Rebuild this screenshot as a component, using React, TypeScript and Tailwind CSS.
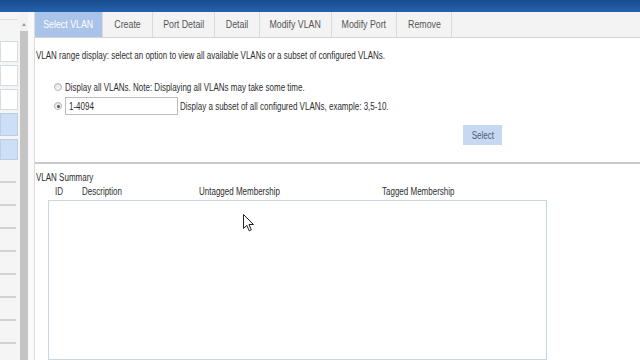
// VLAN 선택 화면 재현
import type { ReactNode } from 'react'

const TABS = [
  { label: 'Select VLAN', w: 'w-[68px]', active: true },
  { label: 'Create', w: 'w-[50px]' },
  { label: 'Port Detail', w: 'w-[62px]' },
  { label: 'Detail', w: 'w-[45px]' },
  { label: 'Modify VLAN', w: 'w-[72px]' },
  { label: 'Modify Port', w: 'w-[65px]' },
  { label: 'Remove', w: 'w-[55px]' },
]

// 원본 캡처가 가로로 눌려 있어서 글자만 좁게 그린다
function T({ children, center }: { children: ReactNode; center?: boolean }) {
  return (
    <span className={`inline-block whitespace-nowrap scale-x-[0.8] ${center ? 'origin-center' : 'origin-left'}`}>
      {children}
    </span>
  )
}

function Radio({ checked }: { checked?: boolean }) {
  return (
    <span className="w-[8px] h-[8px] rounded-full border border-[#b5b5b5] bg-gradient-to-b from-[#e2e2e2] to-[#fafafa] flex items-center justify-center shrink-0">
      {checked && <span className="w-[3px] h-[3px] rounded-full bg-[#555]" />}
    </span>
  )
}

function Sidebar() {
  return (
    <div className="w-[34px] flex shrink-0">
      <div className="w-[18px] bg-[#f5f5f5] flex flex-col overflow-hidden">
        <div className="h-[8px] shrink-0 border-b border-[#dedede]" />
        <div className="h-[21px] shrink-0" />
        <div className="flex flex-col gap-[3px] shrink-0">
          <div className="h-[21px] bg-white border border-[#d3dbe4]" />
          <div className="h-[21px] bg-white border border-[#d3dbe4]" />
          <div className="h-[21px] bg-white border border-[#d3dbe4]" />
          <div className="h-[23px] bg-[#cddff5] border border-[#b9cfe9]" />
          <div className="h-[21px] bg-[#cddff5] border border-[#b9cfe9]" />
        </div>
        {Array.from({ length: 9 }).map((_, i) => (
          <div key={i} className="h-[23px] shrink-0 border-b-2 border-[#d2d2d2] mr-[2px]" />
        ))}
      </div>
      <div className="w-[2px] bg-[#f5f5f5]" />
      <div className="w-[8px] flex flex-col">
        <div className="h-[19px] shrink-0 bg-[#f2f2f2] flex items-end justify-center pb-[5px]">
          <span className="w-0 h-0 border-l-[2px] border-r-[2px] border-b-[3px] border-l-transparent border-r-transparent border-b-[#9a9a9a]" />
        </div>
        <div className="flex-1 bg-[#c4c4c4]" />
      </div>
      <div className="w-[6px] bg-[#f9f9f9]" />
    </div>
  )
}

export default function App() {
  return (
    <div className="w-[640px] h-[360px] overflow-hidden bg-white flex flex-col relative text-[#2e2e2e] font-['Liberation_Sans',Arial,sans-serif]">
      <div className="h-[12px] shrink-0 bg-gradient-to-b from-[#1a4c8e] to-[#2362ac]" />
      <div className="flex flex-1 min-h-0">
        <Sidebar />
        <div className="flex-1 flex flex-col border-l border-[#dcdcdc]">
          <div className="h-[26px] shrink-0 flex bg-[#f3f3f3] border-b border-[#d3d3d3]">
            {TABS.map(t => (
              <div
                key={t.label}
                className={`${t.w} flex items-center justify-center text-[11px] border-r border-[#dadada] ${t.active ? 'bg-[#a9c4e8] text-white' : 'text-[#555]'}`}
              >
                <T center>{t.label}</T>
              </div>
            ))}
          </div>
          <div className="h-[126px] shrink-0 flex flex-col border-b-2 border-[#c9c9c9] text-[10px]">
            <div className="pl-[1px] pt-[12px] leading-[12px]">
              <T>VLAN range display: select an option to view all available VLANs or a subset of configured VLANs.</T>
            </div>
            <div className="flex items-center gap-[3px] pl-[19px] mt-[19px] h-[12px]">
              <Radio />
              <T>Display all VLANs. Note: Displaying all VLANs may take some time.</T>
            </div>
            <div className="flex items-center pl-[19px] mt-[4px] h-[18px]">
              <Radio checked />
              <div className="ml-[3px] w-[113px] h-[18px] border border-[#bdbdbd] bg-white flex items-center pl-[3px]">
                <T>1-4094</T>
              </div>
              <span className="ml-[2px]">
                <T>Display a subset of all configured VLANs, example: 3,5-10.</T>
              </span>
            </div>
            <div className="flex justify-start pl-[428px] mt-[10px]">
              <div className="w-[39px] h-[20px] bg-[#c7d8f1] text-[#4d5c78] flex items-center justify-center">
                <T center>Select</T>
              </div>
            </div>
          </div>
          <div className="flex flex-col text-[10px] flex-1 min-h-0">
            <div className="pl-[1px] pt-[8px] leading-[12px]">
              <T>VLAN Summary</T>
            </div>
            <div className="flex h-[14px] items-center">
              <span className="ml-[20px] w-[27px]"><T>ID</T></span>
              <span className="w-[117px]"><T>Description</T></span>
              <span className="w-[183px]"><T>Untagged Membership</T></span>
              <span><T>Tagged Membership</T></span>
            </div>
            <div className="ml-[13px] mt-[2px] w-[499px] flex-1 border border-[#c9d6e4] bg-white" />
          </div>
        </div>
      </div>
      <svg className="absolute left-[243px] top-[214px]" width="11" height="18" viewBox="0 0 11 18">
        <path d="M0.5 0.5 L0.5 14.5 L3.8 11.3 L6.2 16.8 L8.3 15.9 L6 10.5 L10.5 10.5 Z" fill="#fff" stroke="#222" strokeWidth="1" strokeLinejoin="round" />
      </svg>
    </div>
  )
}
